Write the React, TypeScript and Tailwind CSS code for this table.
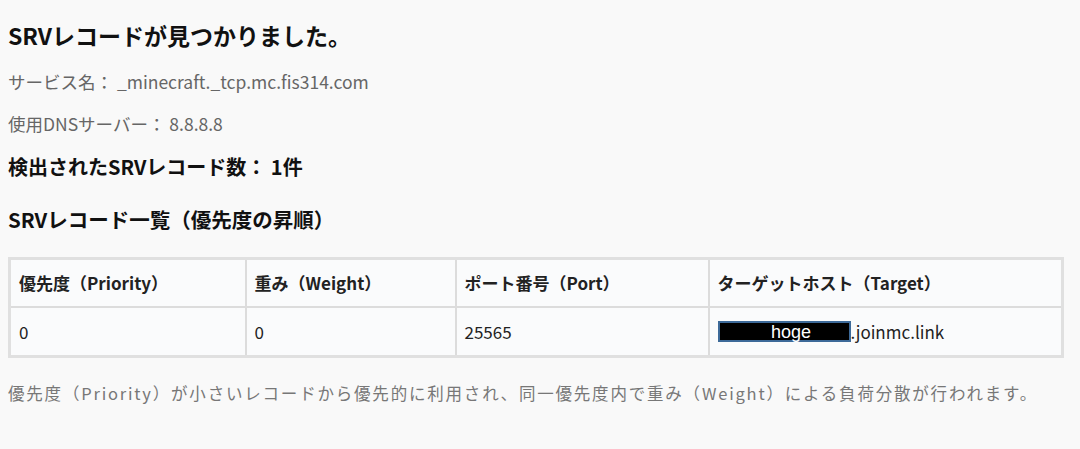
import React from "react";

const font = { fontFamily: '"Noto Sans CJK JP", "Noto Sans", sans-serif' };

export default function App() {
  return (
    <div className="w-[1080px] h-[449px] bg-[#f9f9f9] overflow-hidden text-[#222]" style={font}>
      <div className="px-2 pt-[19px]">
        <h2 className="text-[23px] font-bold leading-[32px] text-[#111]">SRVレコードが見つかりました。</h2>
        <p className="mt-[19px] text-[17.5px] leading-[24px] text-[#666]">サービス名： _minecraft._tcp.mc.fis314.com</p>
        <p className="mt-[18px] text-[17.5px] leading-[24px] text-[#666]">使用DNSサーバー： 8.8.8.8</p>
        <p className="mt-[17px] text-[20px] font-bold leading-[28px] text-[#111]">検出されたSRVレコード数： 1件</p>
        <h3 className="mt-[24px] text-[20.5px] font-bold leading-[28px] text-[#111]">SRVレコード一覧（優先度の昇順）</h3>
        <table className="mt-[24px] w-[1056px] border-collapse border-[3px] border-[#e0e0e0] bg-[#fafbfc] text-[17px]">
          <thead>
            <tr className="h-[48px]">
              <th className="w-[236px] border-2 border-[#dcdcdc] px-2 text-left font-bold text-[#222]">優先度（Priority）</th>
              <th className="w-[210px] border-2 border-[#dcdcdc] px-2 text-left font-bold text-[#222]">重み（Weight）</th>
              <th className="w-[253px] border-2 border-[#dcdcdc] px-2 text-left font-bold text-[#222]">ポート番号（Port）</th>
              <th className="border-2 border-[#dcdcdc] px-2 text-left font-bold text-[#222]">ターゲットホスト（Target）</th>
            </tr>
          </thead>
          <tbody>
            <tr className="h-[50px]">
              <td className="border-2 border-[#dcdcdc] px-2 text-[#222]">0</td>
              <td className="border-2 border-[#dcdcdc] px-2 text-[#222]">0</td>
              <td className="border-2 border-[#dcdcdc] px-2 text-[#222]">25565</td>
              <td className="border-2 border-[#dcdcdc] px-2 text-[#222]">
                <span className="inline-flex items-center">
                  <span
                    className="inline-flex h-[21px] w-[133px] items-center justify-center border-2 border-[#3d6a99] bg-black pl-[14px] text-[18px] leading-none text-white"
                    style={{ fontFamily: '"Liberation Sans", sans-serif' }}
                  >
                    hoge
                  </span>
                  <span>.joinmc.link</span>
                </span>
              </td>
            </tr>
          </tbody>
        </table>
        <p className="mt-[23px] text-[16.5px] tracking-[1.8px] leading-[24px] text-[#777]">
          優先度（Priority）が小さいレコードから優先的に利用され、同一優先度内で重み（Weight）による負荷分散が行われます。
        </p>
      </div>
    </div>
  );
}
